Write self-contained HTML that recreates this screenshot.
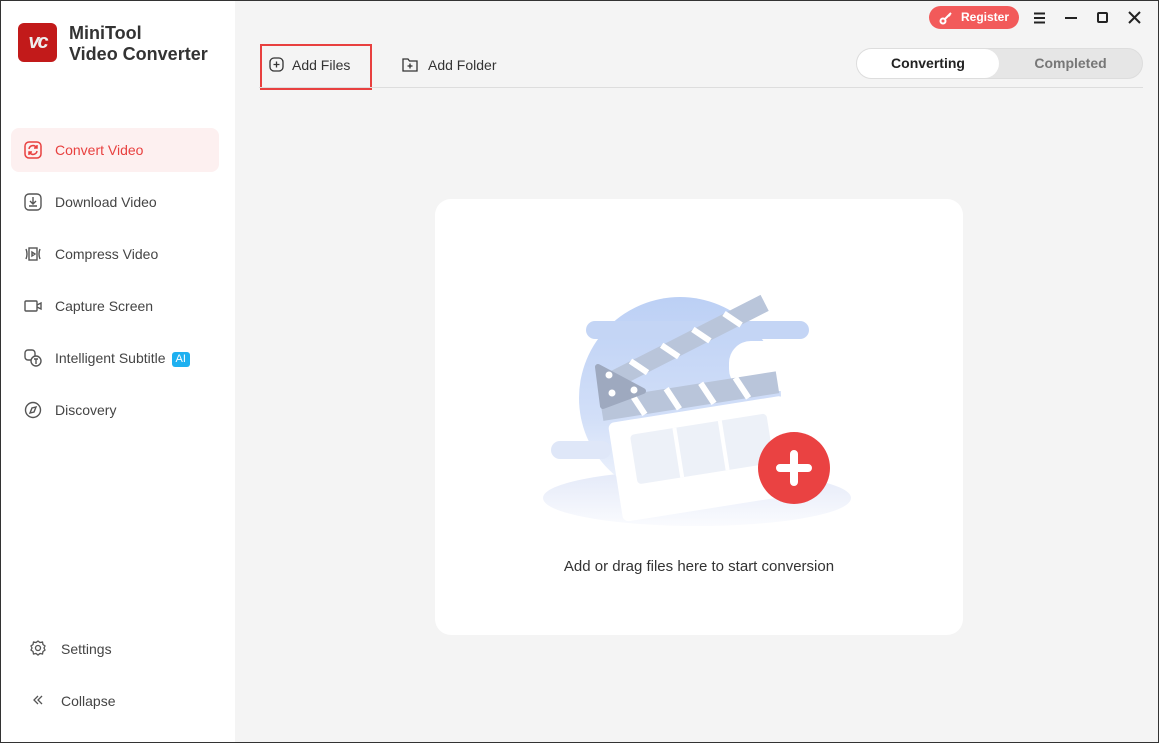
<!DOCTYPE html>
<html><head><meta charset="utf-8"><style>
*{margin:0;padding:0;box-sizing:border-box}
body{width:1159px;height:743px;overflow:hidden;font-family:"Liberation Sans",sans-serif;background:#f4f4f4;position:relative;border:1px solid #333}
.side{position:absolute;left:0;top:0;width:234px;height:741px;background:#fff}
.logo{position:absolute;left:17px;top:22px;width:39px;height:39px;border-radius:6px;background:#c21a1a;color:#eee;font-weight:bold;font-style:italic;font-size:20px;text-align:center;line-height:39px;letter-spacing:-2px}
.title{position:absolute;left:68px;top:22px;font-size:18px;font-weight:bold;color:#333;line-height:21px}
.nav{position:absolute;left:10px;width:208px;height:44px;border-radius:8px;font-size:14px;color:#444;line-height:44px;padding-left:44px}
.nav svg{position:absolute;left:13px;top:13px}
.act{background:#fdf0f0;color:#e8403f}
.ai{display:inline-block;background:#1eb0f0;color:#fff;font-size:11px;border-radius:3px;padding:0 4px;line-height:15px;margin-left:6px;vertical-align:1px}
.tb{position:absolute;font-size:14px;color:#333}
.reg{position:absolute;left:928px;top:5px;width:90px;height:23px;border-radius:12px;background:#f25a5a;color:#fff;font-size:12px;font-weight:bold;line-height:23px;padding-left:32px}
.tabs{position:absolute;left:855px;top:47px;width:287px;height:31px;border-radius:16px;background:#e6e6e6;border:1px solid #ddd}
.tabs div{position:absolute;top:0;height:29px;line-height:29px;font-size:14px;font-weight:bold;text-align:center}
.card{position:absolute;left:434px;top:198px;width:528px;height:436px;background:#fff;border-radius:16px}
</style></head><body>
<div class="side">
<div class="logo">vc</div>
<div class="title">MiniTool<br>Video Converter</div>
<div class="nav act" style="top:127px">
<svg width="18" height="18" viewBox="0 0 18 18" fill="none" stroke="#e8403f" stroke-width="1.5"><rect x="1" y="1" width="16" height="16" rx="4"/><path d="M5 8a4 4 0 0 1 7-2l1 1M13 10a4 4 0 0 1-7 2l-1-1M13 4v3h-3M5 14v-3h3"/></svg>Convert Video</div>
<div class="nav" style="top:179px"><svg width="18" height="18" viewBox="0 0 18 18" fill="none" stroke="#555" stroke-width="1.4"><rect x="1" y="1" width="16" height="16" rx="4"/><path d="M9 4v7M6 8l3 3 3-3M5 13h8"/></svg>Download Video</div>
<div class="nav" style="top:231px"><svg width="18" height="18" viewBox="0 0 18 18" fill="none" stroke="#555" stroke-width="1.4"><rect x="5" y="3" width="8" height="12"/><path d="M8 7v4l3-2zM2 4q2 5 0 10M16 4q-2 5 0 10"/></svg>Compress Video</div>
<div class="nav" style="top:283px"><svg width="18" height="18" viewBox="0 0 18 18" fill="none" stroke="#555" stroke-width="1.4"><rect x="1" y="4" width="12" height="10" rx="1"/><path d="M13 8l4-2v6l-4-2"/></svg>Capture Screen</div>
<div class="nav" style="top:335px"><svg width="18" height="18" viewBox="0 0 18 18" fill="none" stroke="#555" stroke-width="1.4"><rect x="1" y="1" width="10" height="10" rx="3"/><circle cx="12" cy="12" r="5" fill="#fff"/><path d="M10 10h4M12 10v5"/></svg>Intelligent Subtitle<span class="ai">AI</span></div>
<div class="nav" style="top:387px"><svg width="18" height="18" viewBox="0 0 18 18" fill="none" stroke="#555" stroke-width="1.4"><circle cx="9" cy="9" r="7.5"/><path d="M12 6l-2 5-4 1 2-5z"/></svg>Discovery</div>
<div class="nav" style="top:626px;padding-left:50px"><svg style="left:19px" width="16" height="16" viewBox="0 0 16 16" fill="none" stroke="#555" stroke-width="1.3"><circle cx="8" cy="8" r="2.5"/><path d="M8 1l2 1.5 2.5-.5.5 2.5L15 6l-1 2 1 2-2 1.5-.5 2.5-2.5-.5L8 15l-2-1.5-2.5.5L3 11.5 1 10l1-2-1-2 2-1.5L3.5 2 6 2.5z"/></svg>Settings</div>
<div class="nav" style="top:678px;padding-left:50px"><svg style="left:19px" width="16" height="16" viewBox="0 0 16 16" fill="none" stroke="#555" stroke-width="1.3"><path d="M8 4L4 8l4 4M12 4L8 8l4 4"/></svg>Collapse</div>
</div>
<div class="reg"><svg style="position:absolute;left:10px;top:5px" width="14" height="14" viewBox="0 0 14 14" fill="none" stroke="#fff" stroke-width="2"><circle cx="4" cy="10" r="2.5"/><path d="M6 8l6-6M10 4l1 1"/></svg>Register</div>
<svg style="position:absolute;left:1032px;top:10px" width="110" height="14" viewBox="0 0 110 14" fill="none" stroke="#222" stroke-width="2"><path d="M1 2.5h11M1 7h11M1 11.5h11M32 7h12"/><rect x="65" y="2" width="9" height="9" rx="1"/><path d="M96 1l11 11M107 1L96 12"/></svg>
<div style="position:absolute;left:259px;top:43px;width:112px;height:46px;border:2px solid #e8403f"></div>
<div class="tb" style="left:268px;top:56px"><svg style="vertical-align:-2px;margin-right:8px" width="15" height="15" viewBox="0 0 15 15" fill="none" stroke="#333" stroke-width="1.3"><rect x="1" y="1" width="13" height="13" rx="4"/><path d="M7.5 4.5v6M4.5 7.5h6"/></svg>Add Files</div>
<div class="tb" style="left:401px;top:56px"><svg style="vertical-align:-2px;margin-right:10px" width="16" height="15" viewBox="0 0 16 15" fill="none" stroke="#333" stroke-width="1.3"><path d="M1 2h5l1.5 2H15v10H1z"/><path d="M8 6.5v5M5.5 9h5"/></svg>Add Folder</div>
<div style="position:absolute;left:258px;top:86px;width:884px;height:1px;background:#ddd"></div>
<div class="tabs"><div style="left:0;width:142px;background:#fff;border-radius:15px;color:#222">Converting</div><div style="left:142px;width:143px;color:#777">Completed</div></div>
<div class="card">
<svg style="position:absolute;left:106px;top:90px" width="320" height="250" viewBox="0 0 320 250">
<defs><linearGradient id="g" x1="0" y1="0" x2="0" y2="1"><stop offset="0" stop-color="#bcd0f5"/><stop offset="0.6" stop-color="#d2dff8"/><stop offset="1" stop-color="#f4f7fd"/></linearGradient><linearGradient id="e" x1="0" y1="0" x2="0" y2="1"><stop offset="0" stop-color="#e3e9f8"/><stop offset="1" stop-color="#fafbfe"/></linearGradient></defs>
<ellipse cx="156" cy="209" rx="154" ry="28" fill="url(#e)"/>
<circle cx="139" cy="109" r="101" fill="url(#g)"/>
<rect x="45" y="32" width="223" height="18" rx="9" fill="#c4d5f5"/>
<rect x="188" y="52" width="125" height="50" rx="22" fill="#fff"/>
<rect x="10" y="152" width="60" height="18" rx="9" fill="#dfe7f8"/>
<g transform="rotate(-9 160 160)"><rect x="72" y="120" width="178" height="100" rx="6" fill="#fff"/><rect x="92" y="135" width="138" height="50" rx="4" fill="#edf1f8"/><path d="M137 135v50M183 135v50" stroke="#fff" stroke-width="4"/><rect x="68" y="95" width="178" height="22" fill="#b9c5da"/><path d="M100 95l10 22M135 95l10 22M170 95l10 22M205 95l10 22" stroke="#fff" stroke-width="6"/></g>
<g transform="rotate(-27 70 100)"><rect x="66" y="84" width="180" height="18" fill="#b9c5da"/><path d="M100 84l10 18M135 84l10 18M170 84l10 18M205 84l10 18" stroke="#fff" stroke-width="6"/></g>
<path d="M57 78l45 24-40 15z" fill="#9ea9bf" stroke="#9ea9bf" stroke-width="6" stroke-linejoin="round"/>
<circle cx="68" cy="86" r="3.5" fill="#fff"/><circle cx="71" cy="104" r="3.5" fill="#fff"/><circle cx="93" cy="101" r="3.5" fill="#fff"/>
<circle cx="253" cy="179" r="36" fill="#ea4242"/>
<path d="M253 165v28M239 179h28" stroke="#fff" stroke-width="8" stroke-linecap="round"/>
</svg>
<div style="position:absolute;left:0;width:528px;top:359px;text-align:center;font-size:15px;color:#333">Add or drag files here to start conversion</div>
</div>
</body></html>
